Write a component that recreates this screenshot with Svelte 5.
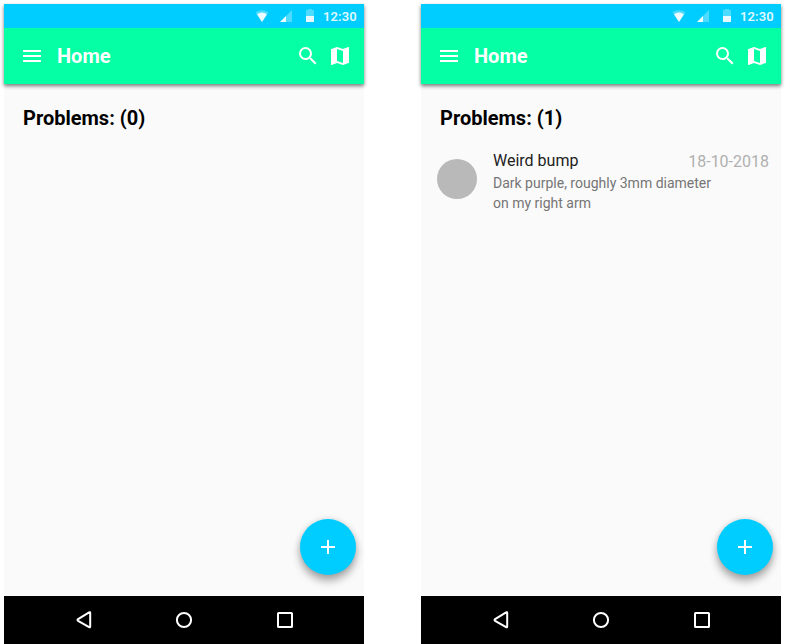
<script>
  const screens = [
    { problems: [] },
    {
      problems: [
        {
          title: 'Weird bump',
          date: '18-10-2018',
          description: 'Dark purple, roughly 3mm diameter on my right arm'
        }
      ]
    }
  ];
</script>

<main>
  {#each screens as screen}
    <section class="phone">
      <header>
        <div class="status">
          <svg class="indicators" width="60" height="14" viewBox="0 0 60 14">
            <path d="M.5 3.2Q6.8-.9 13.5 3.2L7 12.9Z" opacity=".3" />
            <path d="M2 5.2Q7 2 12 5.2L7 12.9Z" opacity=".9" />
            <path d="M25 13L37 1V13Z" opacity=".3" />
            <path d="M25 13L31 7V13Z" opacity=".9" />
            <path d="M51 1H53V0H57V1H59V7H51Z" opacity=".3" />
            <path d="M51 7H59V13H51Z" opacity=".9" />
          </svg>
          <span class="time">12:30</span>
        </div>
        <div class="bar">
          <svg width="24" height="24"><path d="M3 18h18v-2H3zm0-5h18v-2H3zm0-7v2h18V6z" /></svg>
          <h1>Home</h1>
          <svg width="24" height="24">
            <path d="M15.5 14h-.79l-.28-.27A6.47 6.47 0 0 0 16 9.5 6.5 6.5 0 1 0 9.5 16c1.61 0 3.09-.59 4.23-1.57l.27.28v.79l5 4.99L20.49 19zm-6 0C7.01 14 5 11.99 5 9.5S7.01 5 9.5 5 14 7.01 14 9.5 11.99 14 9.5 14z" />
          </svg>
          <svg class="map" width="24" height="24">
            <path d="M20.5 3l-.16.03L15 5.1 9 3 3.36 4.9c-.21.07-.36.25-.36.48V20.5c0 .28.22.5.5.5l.16-.03L9 18.9l6 2.1 5.64-1.9c.21-.07.36-.25.36-.48V3.5c0-.28-.22-.5-.5-.5zM15 19l-6-2.11V5l6 2.11z" />
          </svg>
        </div>
      </header>
      <div class="content">
        <h2>Problems: ({screen.problems.length})</h2>
        {#each screen.problems as problem}
          <article>
            <div class="avatar"></div>
            <div class="details">
              <div class="row">
                <span class="title">{problem.title}</span>
                <span class="date">{problem.date}</span>
              </div>
              <p>{problem.description}</p>
            </div>
          </article>
        {/each}
        <button class="fab" aria-label="Add problem">
          <svg width="24" height="24"><path d="M19 13h-6v6h-2v-6H5v-2h6V5h2v6h6z" /></svg>
        </button>
      </div>
      <nav>
        <svg width="24" height="24"><path class="line" d="M17.2 5V18.6Q17.2 19.8 16.1 19.1L5.1 12.8Q3.9 12 5.1 11.2L16.1 4.4Q17.2 3.8 17.2 4.9Z" /></svg>
        <svg width="24" height="24"><circle class="line" cx="11" cy="12" r="7.1" /></svg>
        <svg width="24" height="24"><rect class="line" x="5" y="5" width="14" height="14" rx=".6" /></svg>
      </nav>
    </section>
  {/each}
</main>

<style>
  :global(body) {
    background: #fff;
    overflow: hidden;
  }
  main {
    display: flex;
    gap: 57px;
    padding: 4px 4px 0;
    font-family: Roboto, sans-serif;
  }
  svg {
    display: block;
    fill: #fff;
    flex: none;
  }
  .phone {
    width: 360px;
    height: 640px;
    flex: none;
    display: flex;
    flex-direction: column;
    background: #fafafa;
  }
  header {
    box-shadow: 0 2px 4px rgba(0, 0, 0, 0.42), 0 2px 3px rgba(0, 0, 0, 0.14);
  }
  .status {
    height: 24px;
    display: flex;
    align-items: center;
    justify-content: flex-end;
    padding-right: 7px;
    background: #00cdff;
  }
  .indicators {
    margin: 0 8px 0 0;
  }
  .time {
    width: 34px;
    font-size: 13px;
    line-height: 24px;
    padding-top: 1px;
    font-weight: 600;
    letter-spacing: 0.1px;
    color: rgba(255, 255, 255, 0.9);
    white-space: nowrap;
  }
  .bar {
    height: 56px;
    box-sizing: border-box;
    display: flex;
    align-items: center;
    padding: 0 12px 0 16px;
    background: #05ffa5;
  }
  h1,
  h2,
  p {
    margin: 0;
  }
  h1 {
    flex: 1;
    margin-left: 13px;
    font-size: 20px;
    font-weight: 700;
    line-height: 24px;
    color: #fff;
  }
  .map {
    margin-left: 8px;
  }
  .content {
    flex: 1;
    position: relative;
  }
  h2 {
    padding: 22px 19px 0;
    font-size: 20px;
    font-weight: 700;
    line-height: 24px;
    color: #000;
  }
  article {
    display: flex;
    padding: 21px 12px 0 16px;
  }
  .avatar {
    width: 40px;
    height: 40px;
    margin-top: 8px;
    border-radius: 50%;
    background: #b9b9b9;
  }
  .details {
    flex: 1;
    margin-left: 16px;
  }
  .row {
    display: flex;
    justify-content: space-between;
    font-size: 16px;
    line-height: 20px;
  }
  .title {
    color: #212121;
  }
  .date {
    color: #b0b0b0;
    padding-top: 1px;
  }
  p {
    width: 235px;
    margin-top: 1px;
    font-size: 14px;
    line-height: 20px;
    color: #757575;
  }
  .fab {
    position: absolute;
    right: 8px;
    bottom: 21px;
    width: 56px;
    height: 56px;
    padding: 0;
    border: 0;
    border-radius: 50%;
    background: #00cdff;
    display: flex;
    align-items: center;
    justify-content: center;
    box-shadow: 0 6px 8px rgba(0, 0, 0, 0.32), 0 0 6px rgba(0, 0, 0, 0.12);
  }
  nav {
    height: 48px;
    display: flex;
    align-items: center;
    justify-content: space-between;
    padding: 0 67px 0 69px;
    background: #000;
  }
  .line {
    fill: none;
    stroke: #fff;
    stroke-width: 2;
  }
</style>
